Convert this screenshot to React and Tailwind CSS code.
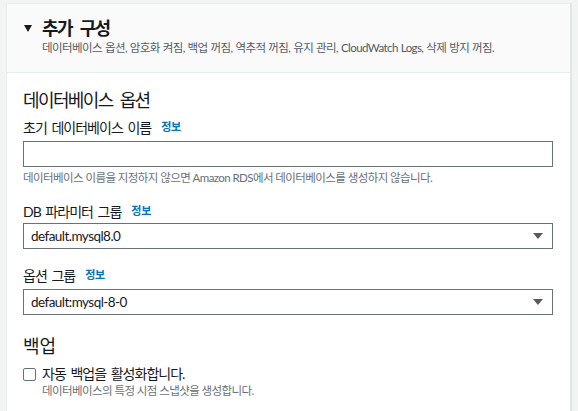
import React from "react";

const font = { fontFamily: 'Lato, "Noto Sans CJK KR", sans-serif' };

function Label({ children }) {
  return (
    <div className="flex items-center h-[20px] text-[14px] text-[#16191f] tracking-[-0.07em] [word-spacing:2px]">
      <span>{children}</span>
      <span className="ml-[10px] text-[11px] font-bold text-[#0073bb] tracking-[-0.03em]">정보</span>
    </div>
  );
}

function Select({ value }) {
  return (
    <div className="flex items-center justify-between h-[26px] border border-[#687078] bg-white pl-[7px] pr-[9px] text-[13.5px] text-[#16191f]">
      <span className="tracking-[-0.04em]">{value}</span>
      <svg width="10" height="6" viewBox="0 0 10 6">
        <path d="M0 0 L10 0 L5 6 Z" fill="#545b64" />
      </svg>
    </div>
  );
}

export default function App() {
  return (
    <div className="w-[578px] h-[411px] overflow-hidden bg-[#f2f3f3]" style={font}>
      <div className="ml-[6px] mt-[3px] w-[566px] border-l border-t border-[#eaeded] border-r-2 border-r-[#e3e6e6] bg-white">
        <div className="bg-[#fafafa] border-b border-[#eaeded] pl-[17px] pt-[13px] pb-[16px]">
          <div className="flex items-center h-[22px]">
            <svg width="8" height="7" viewBox="0 0 8 7" className="mr-[10px] mt-[1px]">
              <path d="M0 0 L8 0 L4 7 Z" fill="#16191f" />
            </svg>
            <span className="text-[18px] font-bold text-[#16191f] tracking-[-0.09em] [word-spacing:5px]">추가 구성</span>
          </div>
          <div className="mt-[1px] pl-[18px] h-[16px] text-[11.5px] text-[#545b64] leading-[16px] whitespace-nowrap tracking-[-0.05em] [word-spacing:0.5px]">
            데이터베이스 옵션, 암호화 켜짐, 백업 꺼짐, 역추적 꺼짐, 유지 관리, CloudWatch Logs, 삭제 방지 꺼짐.
          </div>
        </div>
        <div className="pl-[16px] pr-[17px] pt-[16px]">
          <div className="h-[22px] leading-[22px] text-[18px] text-[#16191f] tracking-[-0.09em] [word-spacing:4px]">데이터베이스 옵션</div>
          <div className="mt-[6px]">
            <Label>초기 데이터베이스 이름</Label>
          </div>
          <div className="mt-[4px] h-[26px] border border-[#687078] bg-white" />
          <div className="mt-[3px] h-[16px] leading-[16px] text-[11.5px] text-[#687078] whitespace-nowrap tracking-[-0.05em]">
            데이터베이스 이름을 지정하지 않으면 Amazon RDS에서 데이터베이스를 생성하지 않습니다.
          </div>
          <div className="mt-[15px]">
            <Label>DB 파라미터 그룹</Label>
          </div>
          <div className="mt-[2px]">
            <Select value="default.mysql8.0" />
          </div>
          <div className="mt-[16px]">
            <Label>옵션 그룹</Label>
          </div>
          <div className="mt-[4px]">
            <Select value="default:mysql-8-0" />
          </div>
          <div className="mt-[20px] h-[22px] leading-[22px] text-[18px] text-[#16191f]">백업</div>
          <div className="mt-[8px] flex items-start">
            <div className="mt-[3px] w-[13px] h-[13px] border border-[#687078] rounded-[2px] bg-white" />
            <div className="ml-[6px]">
              <div className="h-[18px] leading-[18px] text-[14px] text-[#16191f] tracking-[-0.07em] [word-spacing:2px]">자동 백업을 활성화합니다.</div>
              <div className="h-[16px] leading-[16px] text-[11.5px] text-[#687078] tracking-[-0.05em]">데이터베이스의 특정 시점 스냅샷을 생성합니다.</div>
            </div>
          </div>
          <div className="h-[40px]" />
        </div>
      </div>
    </div>
  );
}
